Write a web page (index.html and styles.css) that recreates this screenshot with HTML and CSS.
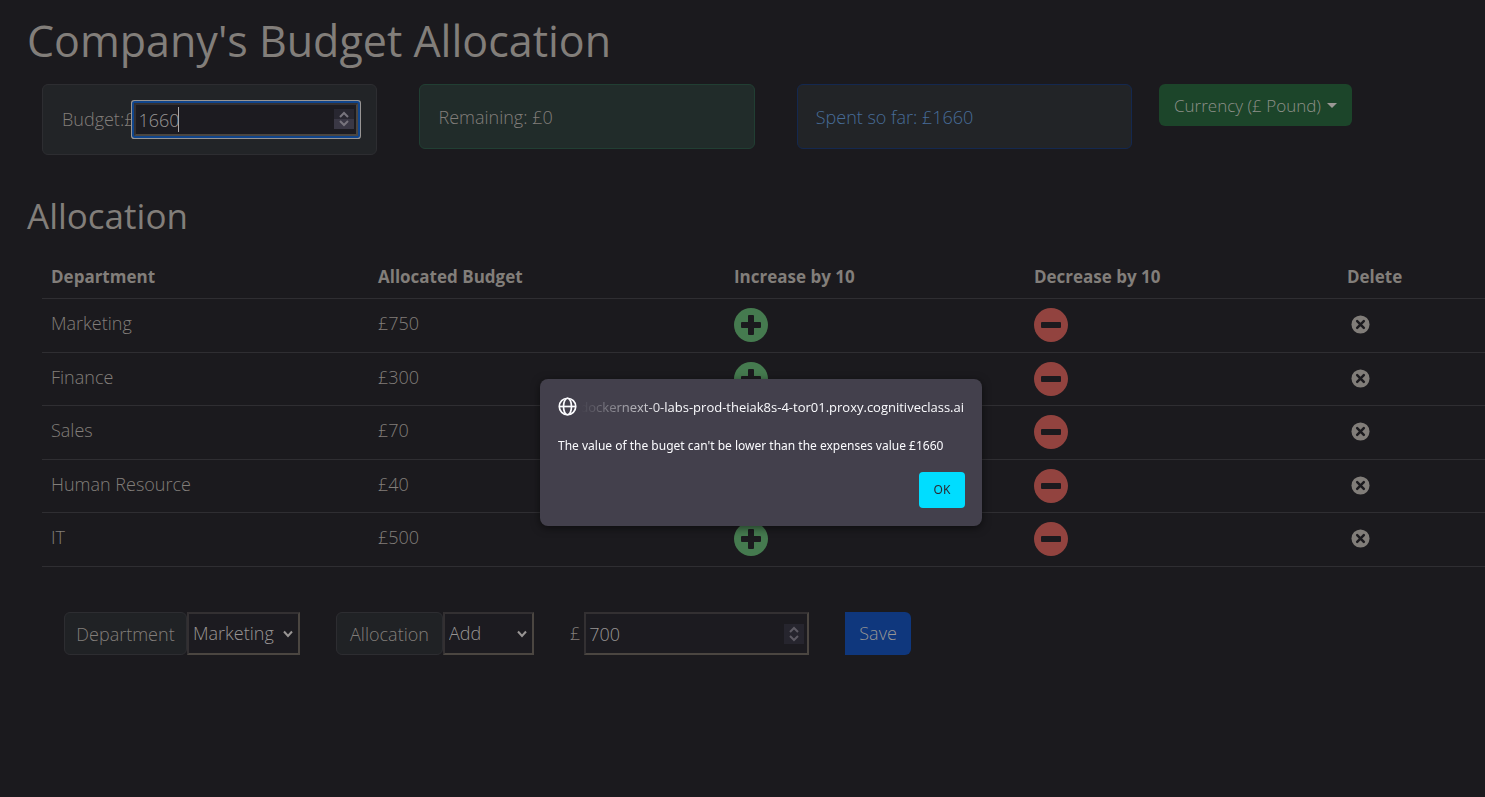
FILE: index.html
```html
<!DOCTYPE html>
<html lang="en">
<head>
<meta charset="utf-8">
<title>Company's Budget Allocation</title>
<link rel="stylesheet" href="styles.css">
</head>
<body>
<svg class="sprite" aria-hidden="true">
  <symbol id="plus" viewBox="0 0 34 34"><circle cx="17" cy="17" r="17" fill="#457a4f"/><path d="M15 7h4a1 1 0 0 1 1 1v6h6a1 1 0 0 1 1 1v4a1 1 0 0 1-1 1h-6v6a1 1 0 0 1-1 1h-4a1 1 0 0 1-1-1v-6H8a1 1 0 0 1-1-1v-4a1 1 0 0 1 1-1h6V8a1 1 0 0 1 1-1z" fill="#1b1a1e"/></symbol>
  <symbol id="minus" viewBox="0 0 34 34"><circle cx="17" cy="17" r="17" fill="#92433f"/><rect x="7" y="14" width="20" height="6" rx="1" fill="#1b1a1e"/></symbol>
  <symbol id="cross" viewBox="0 0 20 20"><circle cx="10" cy="10" r="9.500" fill="#817d79"/><path d="M6.500 6.500l7 7M13.500 6.500l-7 7" stroke="#1b1a1e" stroke-width="2.600" stroke-linecap="round"/></symbol>
  <symbol id="chevron" viewBox="0 0 12 12"><path d="M2 3.500L6 8l4-4.500" fill="none" stroke="#989594" stroke-width="2"/></symbol>
</svg>
<main class="page">
  <h1>Company's Budget Allocation</h1>
  <div class="summary">
    <div class="cards">
      <div class="card budget">
        <label for="budget">Budget:£</label>
        <span class="field number"><input id="budget" class="focused" type="number" value="1660"><i class="caret"></i>
          <svg class="spinner hot" viewBox="0 0 20 20" aria-hidden="true"><rect width="20" height="20" fill="#282731"/><rect y="10" width="20" height="10" fill="#3a3845"/><path d="M6 8l4-4 4 4M6 12l4 4 4-4" fill="none" stroke="#77747d" stroke-width="2"/></svg></span>
      </div>
      <div class="card remaining">Remaining: £0</div>
      <div class="card spent">Spent so far: £1660</div>
    </div>
    <div class="currency"><button class="currency-button" type="button">Currency (£ Pound)</button></div>
  </div>
  <h2>Allocation</h2>
  <table>
    <colgroup><col class="c1"><col class="c2"><col class="c3"><col class="c4"><col class="c5"></colgroup>
    <thead><tr><th scope="col">Department</th><th scope="col">Allocated Budget</th><th scope="col">Increase by 10</th><th scope="col">Decrease by 10</th><th scope="col">Delete</th></tr></thead>
    <tbody>
      <tr><td>Marketing</td><td>£750</td><td><button class="step" type="button" aria-label="Increase Marketing"><svg><use href="#plus"/></svg></button></td><td><button class="step" type="button" aria-label="Decrease Marketing"><svg><use href="#minus"/></svg></button></td><td><button class="delete" type="button" aria-label="Delete Marketing"><svg><use href="#cross"/></svg></button></td></tr>
      <tr><td>Finance</td><td>£300</td><td><button class="step" type="button" aria-label="Increase Finance"><svg><use href="#plus"/></svg></button></td><td><button class="step" type="button" aria-label="Decrease Finance"><svg><use href="#minus"/></svg></button></td><td><button class="delete" type="button" aria-label="Delete Finance"><svg><use href="#cross"/></svg></button></td></tr>
      <tr><td>Sales</td><td>£70</td><td><button class="step" type="button" aria-label="Increase Sales"><svg><use href="#plus"/></svg></button></td><td><button class="step" type="button" aria-label="Decrease Sales"><svg><use href="#minus"/></svg></button></td><td><button class="delete" type="button" aria-label="Delete Sales"><svg><use href="#cross"/></svg></button></td></tr>
      <tr><td>Human Resource</td><td>£40</td><td><button class="step" type="button" aria-label="Increase Human Resource"><svg><use href="#plus"/></svg></button></td><td><button class="step" type="button" aria-label="Decrease Human Resource"><svg><use href="#minus"/></svg></button></td><td><button class="delete" type="button" aria-label="Delete Human Resource"><svg><use href="#cross"/></svg></button></td></tr>
      <tr><td>IT</td><td>£500</td><td><button class="step" type="button" aria-label="Increase IT"><svg><use href="#plus"/></svg></button></td><td><button class="step" type="button" aria-label="Decrease IT"><svg><use href="#minus"/></svg></button></td><td><button class="delete" type="button" aria-label="Delete IT"><svg><use href="#cross"/></svg></button></td></tr>
    </tbody>
  </table>
  <form class="change">
    <div class="group department"><label for="department">Department</label><span class="field"><select id="department"><option>Marketing</option><option>Finance</option><option>Sales</option><option>Human Resource</option><option>IT</option></select><svg class="chevron"><use href="#chevron"/></svg></span></div>
    <div class="group action"><label for="action">Allocation</label><span class="field"><select id="action"><option>Add</option><option>Reduce</option></select><svg class="chevron"><use href="#chevron"/></svg></span></div>
    <div class="amount"><label for="amount">£</label><span class="field number"><input id="amount" type="number" value="700">
      <svg class="spinner" viewBox="0 0 20 20" aria-hidden="true"><rect width="20" height="20" fill="#26252e"/><path d="M6 8l4-4 4 4M6 12l4 4 4-4" fill="none" stroke="#5d5a63" stroke-width="2"/></svg></span></div>
    <button class="save" type="button">Save</button>
  </form>
</main>
<dialog open aria-labelledby="host">
  <div class="origin">
    <svg viewBox="0 0 18 18" aria-hidden="true"><g fill="none" stroke="#fbfbfe" stroke-width="1.600"><circle cx="9" cy="9" r="7.800"/><ellipse cx="9" cy="9" rx="3.800" ry="7.800"/><path d="M1.500 9h15"/></g></svg>
    <span id="host">dockernext-0-labs-prod-theiak8s-4-tor01.proxy.cognitiveclass.ai</span>
  </div>
  <p>The value of the buget can't be lower than the expenses value £1660</p>
  <button class="ok" type="button">OK</button>
</dialog>
</body>
</html>
```
FILE: styles.css
```css
* { box-sizing: border-box; }
body {
  margin: 0;
  min-height: 100vh;
  overflow: hidden;
  background: #1b1a1e;
  color: #827e7a;
  font: 300 18px/27px "Open Sans", "Noto Sans", sans-serif;
}
button, input, select { font: inherit; color: inherit; margin: 0; }
button { border: 0; background: none; padding: 0; }
.sprite { display: none; }
.page { padding: 14px 0 0 27px; }
h1, h2 { margin: 0; font-weight: 400; }
h1 { font-size: 43px; line-height: 54px; }
h2 { margin-top: 39px; font-size: 35px; line-height: 44px; }

.summary { display: flex; align-items: flex-start; gap: 27px; margin: 16px 0 0 15px; }
.cards { flex: 1090 1 0; display: grid; grid-template-columns: repeat(3, 1fr); gap: 42px; align-items: start; }
.currency { flex: 326 1 0; }
.card { border: 1px solid #2d2d31; border-radius: 6px; background: #222427; padding: 19px 18px 17px; white-space: nowrap; }
.budget { display: flex; align-items: center; padding: 18px 18px 18px 19px; }
.remaining { border-color: #213f33; background: #212c2a; }
.spent { border-color: #14284f; color: #476c98; }
.currency-button { display: flex; align-items: center; gap: 6px; height: 42px; padding: 0 15px; border-radius: 6px; background: #1c452a; color: #8d9089; font-size: 17px; }
.currency-button::after { content: ""; border: 5px solid transparent; border-top-color: #9b9895; border-bottom: 0; }

.field { position: relative; display: block; }
input, select {
  width: 100%;
  height: 43px;
  border: 2px solid;
  border-color: #333032 #4b4641 #4b4641 #333032;
  border-radius: 0;
  background: #1c1b20;
  color: #989594;
  padding: 0 4px;
  outline: 0;
  display: block;
  appearance: none;
}
.number input { appearance: textfield; padding: 0 3px; }
input::-webkit-inner-spin-button { appearance: none; }
.number .focused { height: 33px; padding: 0 2px; border-radius: 1px; box-shadow: 0 0 0 2px #10458c, 0 0 0 3px #989594; }
.budget .field { width: 224px; }
.caret { position: absolute; left: 44px; top: 4px; width: 1px; height: 25px; background: #aaa7a8; }
.spinner { position: absolute; right: 5px; top: 12px; width: 20px; height: 20px; }
.hot { right: 4px; top: 6px; }
.chevron { position: absolute; right: 6px; top: 16px; width: 12px; height: 12px; pointer-events: none; }

table { width: calc(100% - 15px); margin: 21px 0 0 15px; border-collapse: separate; border-spacing: 0; table-layout: fixed; }
.c1 { width: 22.66%; }
.c2 { width: 24.67%; }
.c3 { width: 20.79%; }
.c4 { width: 21.69%; }
th, td { border-bottom: 1px solid #2f2e32; text-align: left; vertical-align: top; padding: 9px 9px 0; }
th { height: 40px; padding-top: 4px; font-size: 17px; font-weight: 700; }
td { height: 54px; line-height: 28px; }
tbody tr:nth-child(even) td { height: 53px; }
td:nth-child(-n+2) { padding-top: 10px; }
.step, .delete { display: block; }
.step svg { display: block; width: 34px; height: 34px; }
.delete { padding: 7px 4px; }
.delete svg { display: block; width: 19px; height: 19px; }

.change { display: flex; align-items: flex-start; gap: 36px; margin: 45px 0 0 37px; }
.group { display: flex; }
.group label { height: 43px; padding: 8px 0 0; text-align: center; border: 1px solid #2d2d31; border-radius: 6px; background: #202225; }
.department label { width: 123px; }
.action label { width: 107px; }
.department .field { width: 113px; }
.action .field { width: 91px; }
.amount { display: flex; align-items: center; gap: 4px; }
.amount .field { width: 225px; }
.save { height: 43px; padding: 0 14px; border-radius: 0 6px 6px 0; background: #0f377d; color: #969594; }

dialog {
  position: fixed;
  left: 540px;
  top: 379px;
  width: 442px;
  margin: 0;
  padding: 18px 18px;
  border: 0;
  border-radius: 8px;
  background: #43404c;
  color: #fbfbfe;
  box-shadow: 0 2px 8px #0008;
  font: 400 12px/18px "Noto Sans", "Open Sans", sans-serif;
  white-space: nowrap;
}
.origin { display: flex; align-items: center; gap: 4px; font-family: "Open Sans", "Noto Sans", sans-serif; font-size: 13px; }
.origin svg { flex: none; width: 19px; height: 19px; }
.origin span { flex: 1; display: flex; justify-content: flex-end; overflow: hidden; mask-image: linear-gradient(to right, #0000, #000 88px); }
dialog p { margin: 21px 0 17px; }
.ok { display: block; margin: 0 -1px 0 auto; width: 46px; height: 36px; border-radius: 4px; background: #00ddff; color: #2b2a33; }
```
